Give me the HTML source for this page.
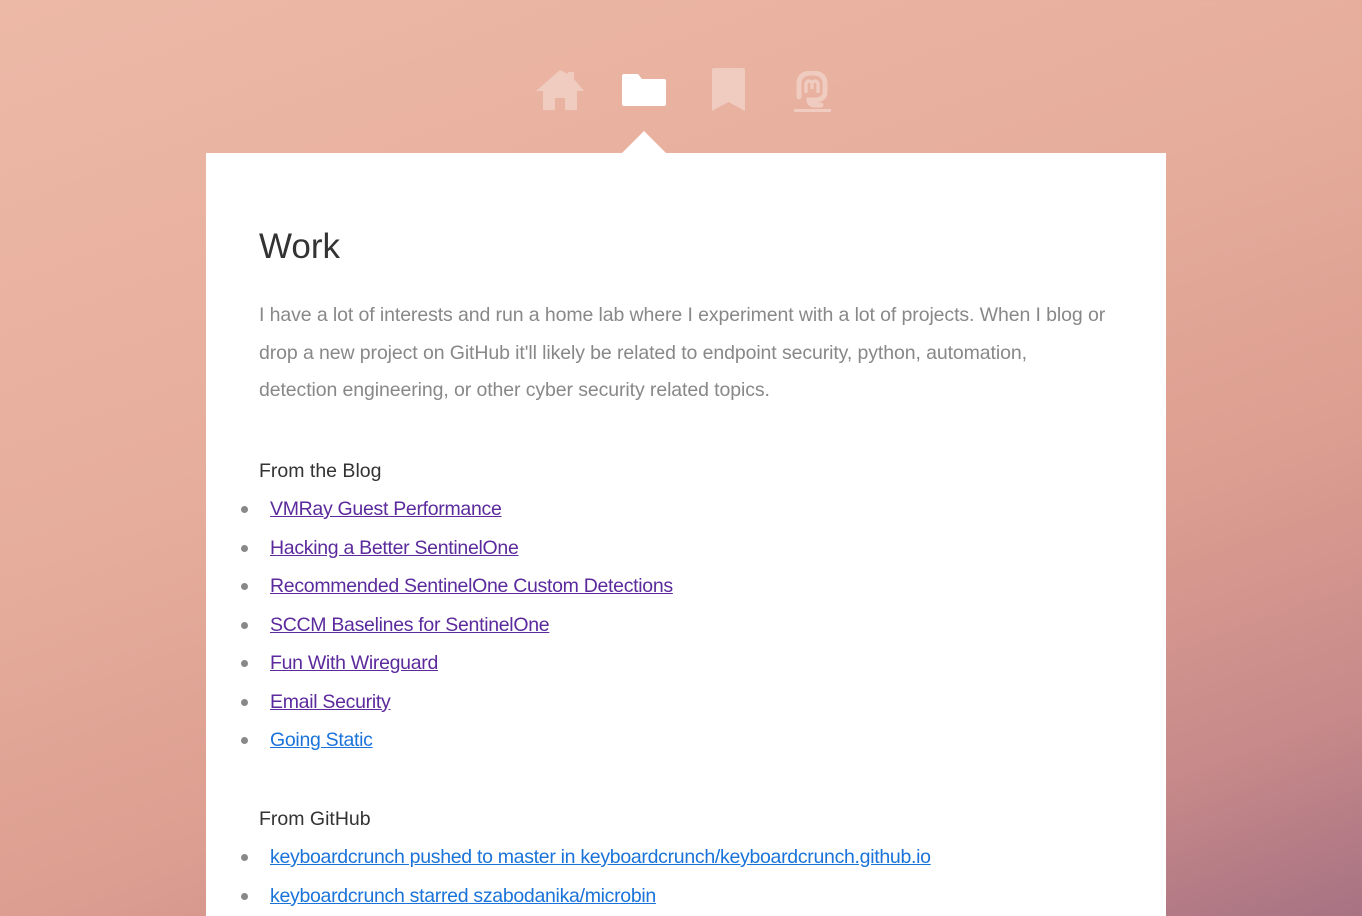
<!DOCTYPE html>
<html><head><meta charset="utf-8"><style>
html,body{margin:0;height:916px;overflow:hidden}
body{background:linear-gradient(160deg,#edb9a7 0%,#e6ad9c 40%,#dc9e90 65%,#c88a8a 85%,#a77283 100%);font-family:"Liberation Sans",sans-serif;position:relative;width:1362px}
.nav{position:absolute;top:68px;left:0;width:1362px;height:50px}
.nav svg{position:absolute}
.card{position:absolute;left:206px;top:153px;width:960px;height:800px;background:#fff}
.arrow{position:absolute;left:622px;top:131px;width:0;height:0;border-left:22px solid transparent;border-right:22px solid transparent;border-bottom:22px solid #fff}
h1{position:absolute;left:53px;top:74px;margin:0;font-weight:normal;font-size:35px;color:#333}
p{position:absolute;left:53px;top:144px;width:880px;margin:0;font-size:19.5px;line-height:37.5px;color:#888;letter-spacing:-0.1px;white-space:nowrap}
h3{position:absolute;left:53px;margin:0;font-weight:normal;font-size:19.5px;color:#333}
ul{position:absolute;left:34px;margin:0;padding:0;list-style:none}
li{height:38.5px;font-size:19.5px;line-height:30px;position:relative;padding-left:30px;letter-spacing:-0.3px}
li:before{content:"";position:absolute;left:1px;top:12px;width:7px;height:7px;border-radius:50%;background:#888}
a.v{color:#5b2a9c}a{color:#1a73d9}
</style></head><body>
<div class="nav">
<svg style="left:536px;top:2px" width="48" height="40" viewBox="0 0 48 40"><path d="M24 0L0 21h7v19h12V28h10v12h12V21h7L38 9V2h-6v2z" fill="#f0cbbf"/></svg>
<svg style="left:622px;top:6px" width="44" height="32" viewBox="0 0 44 32"><path d="M2 0h14l4 5h22a2 2 0 0 1 2 2v23a2 2 0 0 1-2 2H2a2 2 0 0 1-2-2V2a2 2 0 0 1 2-2z" fill="#fff"/></svg>
<svg style="left:712px;top:0" width="33" height="43" viewBox="0 0 33 43"><path d="M2 0h29a2 2 0 0 1 2 2v41L16.5 34 0 43V2a2 2 0 0 1 2-2z" fill="#f0cbbf"/></svg>
<svg style="left:794px;top:3px" width="38" height="42" viewBox="0 0 38 42"><path d="M5 26V13C5 5 10 2 18 2s13 3 13 11v8c0 5-4 8-10 8h-6c0 3 2 5 6 5h6" fill="none" stroke="#f0cbbf" stroke-width="5" stroke-linecap="round"/><path d="M12 22V13a3 3 0 0 1 6 0v5M18 18v-5a3 3 0 0 1 6 0v9" fill="none" stroke="#f0cbbf" stroke-width="3.5"/><rect x="0" y="38" width="37" height="3" fill="#f0cbbf"/></svg>
</div>
<div class="arrow"></div>
<div class="card">
<h1>Work</h1>
<p>I have a lot of interests and run a home lab where I experiment with a lot of projects. When I blog or<br>drop a new project on GitHub it'll likely be related to endpoint security, python, automation,<br>detection engineering, or other cyber security related topics.</p>
<h3 style="top:307px">From the Blog</h3>
<ul style="top:341px">
<li><a class="v" href="#">VMRay Guest Performance</a></li>
<li><a class="v" href="#">Hacking a Better SentinelOne</a></li>
<li><a class="v" href="#">Recommended SentinelOne Custom Detections</a></li>
<li><a class="v" href="#">SCCM Baselines for SentinelOne</a></li>
<li><a class="v" href="#">Fun With Wireguard</a></li>
<li><a class="v" href="#">Email Security</a></li>
<li><a href="#">Going Static</a></li>
</ul>
<h3 style="top:655px">From GitHub</h3>
<ul style="top:689px">
<li><a href="#">keyboardcrunch pushed to master in keyboardcrunch/keyboardcrunch.github.io</a></li>
<li><a href="#">keyboardcrunch starred szabodanika/microbin</a></li>
</ul>
</div>
</body></html>
